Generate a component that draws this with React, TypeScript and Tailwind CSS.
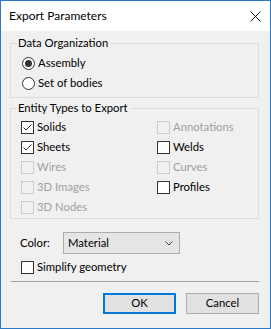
import React from "react";

const font = "font-['Lato','Noto_Sans',sans-serif] text-[11.3px]";

function CheckBox({ label, checked = false, disabled = false }: { label: string; checked?: boolean; disabled?: boolean }) {
  return (
    <div className="flex h-[20px] items-center">
      <span
        className={`flex h-[13px] w-[13px] shrink-0 items-center justify-center border ${
          disabled ? "border-[#cccccc] bg-[#f0f0f0]" : "border-[#333333] bg-white"
        }`}
      >
        {checked && (
          <svg width="11" height="11" viewBox="0 0 11 11" fill="none">
            <path d="M1.5 5.5 L4 8 L9.5 2.5" stroke="#333333" strokeWidth="1" />
          </svg>
        )}
      </span>
      <span className={`ml-[3px] ${disabled ? "text-[#a0a0a0]" : "text-black"}`}>{label}</span>
    </div>
  );
}

function Radio({ label, checked = false }: { label: string; checked?: boolean }) {
  return (
    <div className="flex h-[20px] items-center">
      <span className="flex h-[13px] w-[13px] shrink-0 items-center justify-center rounded-full border border-[#333333] bg-white">
        {checked && <span className="h-[7px] w-[7px] rounded-full bg-[#333333]" />}
      </span>
      <span className="ml-[3px] text-black">{label}</span>
    </div>
  );
}

const left = [
  { label: "Solids", checked: true },
  { label: "Sheets", checked: true },
  { label: "Wires", disabled: true },
  { label: "3D Images", disabled: true },
  { label: "3D Nodes", disabled: true },
];

const right = [
  { label: "Annotations", disabled: true },
  { label: "Welds" },
  { label: "Curves", disabled: true },
  { label: "Profiles" },
];

export default function App() {
  return (
    <div className={`flex h-[329px] w-[271px] flex-col border border-[#2a7ac6] bg-[#f0f0f0] ${font} text-black`}>
      {/* title bar */}
      <div className="flex h-[30px] shrink-0 items-center justify-between bg-white pl-[8px] pr-[9px]">
        <span className="text-[12px]">Export Parameters</span>
        <svg width="11" height="11" viewBox="0 0 11 11">
          <path d="M0.5 0.5 L10.5 10.5 M10.5 0.5 L0.5 10.5" stroke="#111" strokeWidth="1" />
        </svg>
      </div>

      <div className="flex flex-1 flex-col pl-[9px] pr-[11px]">
        <fieldset className="mt-[4px] border border-[#dcdcdc]">
          <legend className="ml-[5px] px-[2px] leading-[16px]">Data Organization</legend>
          <div className="pb-[4px] pl-[11px] pt-[2px]">
            <Radio label="Assembly" checked />
            <Radio label="Set of bodies" />
          </div>
        </fieldset>

        <fieldset className="mt-[2px] border border-[#dcdcdc]">
          <legend className="ml-[5px] px-[2px] leading-[16px]">Entity Types to Export</legend>
          <div className="grid grid-cols-[136px_1fr] pb-[1px] pl-[10px] pt-[1px]">
            <div className="flex flex-col">
              {left.map((c) => (
                <CheckBox key={c.label} {...c} />
              ))}
            </div>
            <div className="flex flex-col">
              {right.map((c) => (
                <CheckBox key={c.label} {...c} />
              ))}
            </div>
          </div>
        </fieldset>

        <div className="mt-[13px] flex h-[22px] items-center pl-[10px]">
          <span className="w-[43px]">Color:</span>
          <div className="flex h-[22px] w-[117px] items-center justify-between border border-[#adadad] bg-[#e5e5e5] pl-[4px] pr-[6px]">
            <span>Material</span>
            <svg width="8" height="5" viewBox="0 0 8 5" fill="none">
              <path d="M0.5 0.5 L4 4 L7.5 0.5" stroke="#444" strokeWidth="1" />
            </svg>
          </div>
        </div>

        <div className="mt-[3px] pl-[11px]">
          <CheckBox label="Simplify geometry" />
        </div>

        <div className="ml-[1px] mt-[4px] h-px bg-[#a0a0a0]" />

        <div className="mt-[11px] flex justify-end gap-[10px]">
          <button className="h-[21px] w-[73px] border-2 border-[#0078d7] bg-[#e1e1e1]">OK</button>
          <button className="h-[21px] w-[73px] border border-[#adadad] bg-[#e1e1e1]">Cancel</button>
        </div>
      </div>
    </div>
  );
}
